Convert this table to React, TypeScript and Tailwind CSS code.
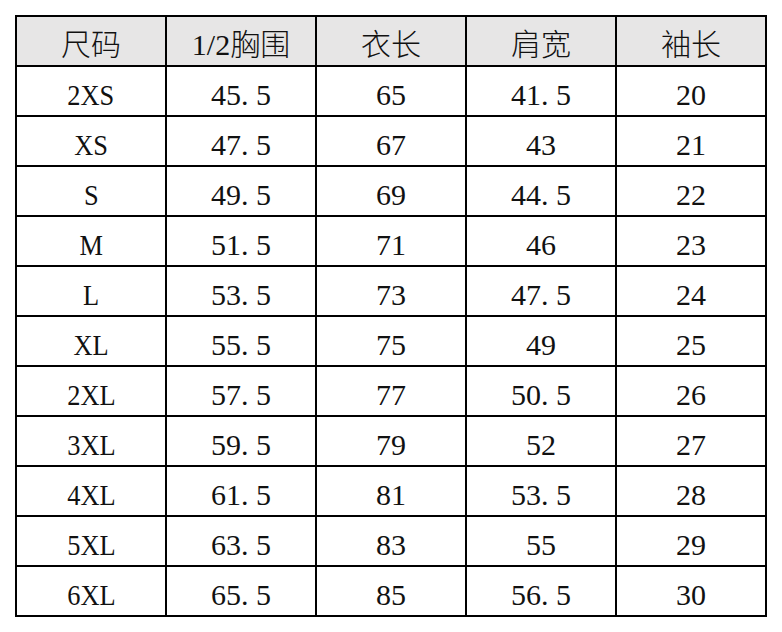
import React from "react";

const header = ["尺码", "1/2胸围", "衣长", "肩宽", "袖长"];
const rows: string[][] = [
  ["2XS", "45.5", "65", "41.5", "20"],
  ["XS", "47.5", "67", "43", "21"],
  ["S", "49.5", "69", "44.5", "22"],
  ["M", "51.5", "71", "46", "23"],
  ["L", "53.5", "73", "47.5", "24"],
  ["XL", "55.5", "75", "49", "25"],
  ["2XL", "57.5", "77", "50.5", "26"],
  ["3XL", "59.5", "79", "52", "27"],
  ["4XL", "61.5", "81", "53.5", "28"],
  ["5XL", "63.5", "83", "55", "29"],
  ["6XL", "65.5", "85", "56.5", "30"],
];

function Num({ v }: { v: string }) {
  const i = v.indexOf(".");
  if (i < 0) return <>{v}</>;
  return (
    <>
      {v.slice(0, i)}
      <span className="inline-block w-[15px] text-left">.</span>
      {v.slice(i + 1)}
    </>
  );
}

export default function App() {
  return (
    <div className="w-[782px] h-[632px] bg-white pt-[15px] pl-[15px]">
      <div className="grid grid-cols-[repeat(5,148px)] auto-rows-[48px] gap-[2px] p-[2px] bg-black w-[752px]">
        {header.map((h) => (
          <div
            key={h}
            className="bg-[#e7e6e6] flex items-center justify-center pt-[8px] text-[30px] text-[#111] font-light leading-none"
            style={{ fontFamily: '"Liberation Serif", "Noto Sans CJK SC", serif' }}
          >
            {h}
          </div>
        ))}
        {rows.map((r) =>
          r.map((c, j) => (
            <div
              key={r[0] + j}
              className="bg-white flex items-center justify-center pt-[7px] text-[30px] text-[#111] leading-none"
              style={{ fontFamily: '"Liberation Serif", serif' }}
            >
              {j === 0 ? (
                <span className="inline-block scale-x-[0.88]">{c}</span>
              ) : (
                <Num v={c} />
              )}
            </div>
          ))
        )}
      </div>
    </div>
  );
}
